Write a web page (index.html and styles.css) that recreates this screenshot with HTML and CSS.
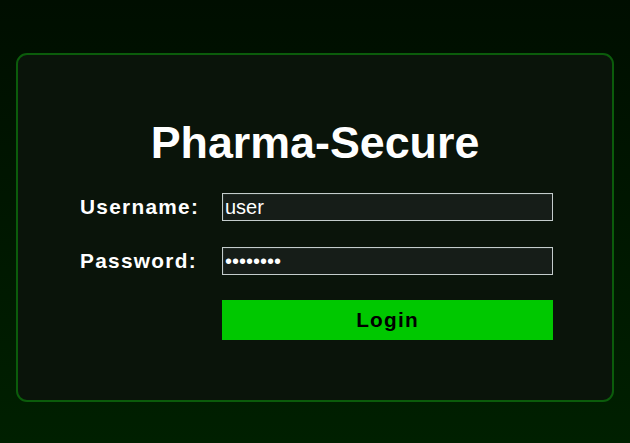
FILE: index.html
```html
<!DOCTYPE html>
<html lang="en">
<head>
<meta charset="utf-8">
<title>Pharma-Secure</title>
<link rel="stylesheet" href="styles.css">
</head>
<body>
<main class="card">
  <h1 class="title">Pharma-Secure</h1>
  <form class="login-form" onsubmit="return false">
    <label class="label" for="username">Username:</label>
    <input class="field" id="username" type="text" value="user">
    <label class="label" for="password">Password:</label>
    <input class="field" id="password" type="password" value="password">
    <span></span>
    <button class="btn" type="submit">Login</button>
  </form>
</main>
</body>
</html>
```
FILE: styles.css
```css
html, body {
  margin: 0;
  padding: 0;
}
body {
  min-height: 100vh;
  background: linear-gradient(to bottom, #000e00 0%, #002000 100%);
  font-family: "Liberation Sans", Arial, sans-serif;
  color: #fff;
  padding-top: 53px;
  box-sizing: border-box;
}
.card {
  margin: 0 16px;
  height: 349px;
  box-sizing: border-box;
  border: 2px solid #0b5c0b;
  border-radius: 11px;
  background: #0a140a;
  padding-top: 62px;
}
.title {
  margin: 0;
  text-align: center;
  font-size: 44.8px;
  line-height: 50px;
  font-weight: bold;
  color: #fff;
}
.login-form {
  margin-top: 26px;
  padding-left: 62px;
  display: grid;
  grid-template-columns: 142px 331px;
  grid-template-rows: 28px 28px 40px;
  row-gap: 26px;
  justify-content: start;
  align-items: center;
}
.label {
  font-size: 20.8px;
  font-weight: bold;
  letter-spacing: 1.3px;
  color: #fff;
}
.field {
  box-sizing: border-box;
  width: 331px;
  height: 28px;
  margin: 0;
  padding: 0 2px;
  border: 1px solid #c4cccc;
  background: #161d18;
  color: #fff;
  font-family: "Liberation Sans", Arial, sans-serif;
  font-size: 20px;
  outline: none;
  box-shadow: inset 1px 1px 0 #202a24;
}
.btn {
  align-self: start;
  width: 331px;
  height: 40px;
  margin: -1px 0 0;
  border: none;
  background: #00c800;
  color: #000;
  font-family: "Liberation Sans", Arial, sans-serif;
  font-size: 20.8px;
  font-weight: bold;
  letter-spacing: 1.2px;
  cursor: pointer;
}
```
